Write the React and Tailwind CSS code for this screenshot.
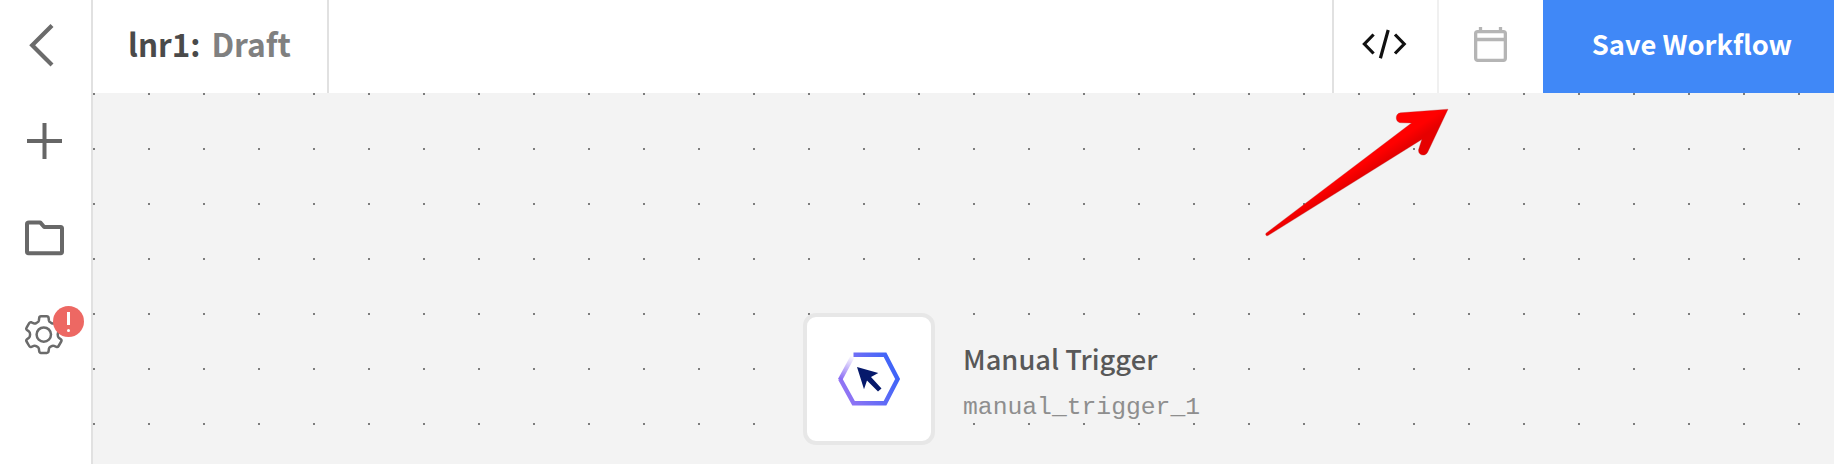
const sans = "font-['Noto_Sans_CJK_SC','Noto_Sans',sans-serif]";

function Sidebar() {
  return (
    <aside className="flex w-[93px] shrink-0 flex-col items-start border-r-2 border-[#e1e1e1] bg-white">
      <svg className="ml-[28px] mt-[22px] h-[46px] w-[28px]" viewBox="0 0 28 46" fill="none" stroke="#6b6b6b" strokeWidth="4.2">
        <path d="M24 3.4 4.2 23.2 24 43" />
      </svg>
      <svg className="ml-[27px] mt-[55px] h-[36px] w-[36px]" viewBox="0 0 36 36" fill="none" stroke="#666" strokeWidth="4">
        <path d="M0 18H35M17.5 0V36" />
      </svg>
      <svg className="ml-[25px] mt-[61px] h-[36px] w-[40px]" viewBox="0 0 40 36" fill="none" stroke="#686868" strokeWidth="4" strokeLinejoin="round">
        <path d="M4 2.4H15.2L19.2 7H35.6Q37 7 37 8.6V31.8Q37 33.2 35.6 33.2H3.6Q2 33.2 2 31.8V4Q2 2.4 4 2.4Z" />
      </svg>
      <div className="relative ml-[25px] mt-[58px] h-[42px] w-[60px]">
        <svg className="absolute left-0 top-0 h-[42px] w-[40px]" viewBox="0 0 40 42" fill="none" stroke="#6b6b6b" strokeWidth="2.5" strokeLinejoin="round">
          <circle cx="18.8" cy="20.6" r="7.2" />
          <path d="M16 2.3H21.8Q23.4 2.3 23.6 4L23.9 6.4Q24.2 7.8 25.6 8.5L26.6 9.1Q27.8 9.8 29 9.3L31.4 8.3Q32.8 7.8 33.6 9.2L36.2 13.7Q37 15 35.8 16L33.8 17.5Q32.7 18.4 32.7 20.6Q32.7 22.8 33.8 23.7L35.8 25.2Q37 26.2 36.2 27.5L33.6 32Q32.8 33.4 31.4 32.9L29 31.9Q27.8 31.4 26.6 32.1L25.6 32.7Q24.2 33.4 23.9 34.8L23.6 37.2Q23.4 38.9 21.8 38.9H16Q14.4 38.9 14.2 37.2L13.9 34.8Q13.6 33.4 12.2 32.7L11.2 32.1Q10 31.4 8.8 31.9L6.4 32.9Q5 33.4 4.2 32L1.6 27.5Q.8 26.2 2 25.2L4 23.7Q5.1 22.8 5.1 20.6Q5.1 18.4 4 17.5L2 16Q.8 15 1.6 13.7L4.2 9.2Q5 7.8 6.4 8.3L8.8 9.3Q10 9.8 11.2 9.1L12.2 8.5Q13.6 7.8 13.9 6.4L14.2 4Q14.4 2.3 16 2.3Z" />
        </svg>
        <div className="absolute left-[28px] -top-[8px] flex h-[31px] w-[31px] flex-col items-center gap-[4px] rounded-full bg-[#ed6863] pt-[6px]">
          <span className="h-[13px] w-[3px] bg-white" />
          <span className="h-[3px] w-[3px] rounded-full bg-white" />
        </div>
      </div>
    </aside>
  );
}

function Header() {
  return (
    <header className="flex h-[93px] shrink-0 bg-white">
      <div className="flex w-[236px] items-center border-r-2 border-[#e1e1e1] pb-[6px] pl-[35px] text-[31.4px] font-bold leading-none whitespace-pre">
        <span className="text-[#4a4a4a]">lnr1:</span>
        <span className="ml-[11px] text-[31.8px] text-[#808080]">Draft</span>
      </div>
      <div className="flex-1" />
      <div className="flex w-[107px] items-center border-x-2 border-l-[#e1e1e1] border-r-[#f0f0f0] pl-[27px]">
        <svg className="-mt-[5px] h-[30px] w-[46px]" viewBox="0 0 46 30" fill="none" stroke="#111" strokeWidth="3.2">
          <path d="M12.6 5.5 3.4 15 12.6 24.5M34 5.5 43.2 15 34 24.5M27.2 1 19.4 29.2" />
        </svg>
      </div>
      <div className="flex w-[104px] items-center pl-[35px]">
        <svg className="-mt-[4px] h-[35px] w-[33px]" viewBox="0 0 33 35" fill="none" stroke="#b5b5b5" strokeWidth="3.3">
          <rect x="1.65" y="4.6" width="29.7" height="28.7" rx="2" />
          <path d="M2 12.5H31M6.5 0V4M26.5 0V4" />
        </svg>
      </div>
      <button className="flex w-[291px] items-center justify-center bg-[#4088f7] pb-[6px] pl-[7px] text-[27.3px] font-bold leading-none text-white whitespace-nowrap">
        Save Workflow
      </button>
    </header>
  );
}

function TriggerNode() {
  return (
    <div className="absolute left-[710px] top-[220px] flex h-[132px] items-start">
      <div className="flex h-[132px] w-[132px] items-center justify-center rounded-[13px] border-4 border-[#e7e7e7] bg-white">
        <svg className="h-[54px] w-[64px]" viewBox="0 0 64 54" fill="none">
          <defs>
            <linearGradient id="hex" x1="60" y1="18" x2="6" y2="40" gradientUnits="userSpaceOnUse">
              <stop stopColor="#3c64f8" />
              <stop offset="1" stopColor="#9475f4" />
            </linearGradient>
            <linearGradient id="fade" x1="16" y1="4" x2="4" y2="27" gradientUnits="userSpaceOnUse">
              <stop stopColor="#9475f4" stopOpacity="0" />
              <stop offset="1" stopColor="#8b6ef5" />
            </linearGradient>
          </defs>
          <path d="M16.5 2.8H48L60.6 27 48 51.3H16.6L3.2 27" stroke="url(#hex)" strokeWidth="4.4" />
          <path d="M2.9 28 15.6 4.5" stroke="url(#fade)" strokeWidth="4.4" />
          <path d="M20 15 41.3 21 34 25 44.5 36.5 41 39.5 30 28.5 27 37.3Z" fill="#06196b" />
        </svg>
      </div>
      <div className="flex flex-col items-start pl-[28px] pt-[26px]">
        <div className="bg-[#f3f3f3] text-[27.3px] font-medium leading-[38px] text-[#585858] whitespace-nowrap">Manual Trigger</div>
        <div className="mt-[12px] font-['Liberation_Mono',monospace] text-[24.7px] leading-[36px] text-[#8e8e8e] whitespace-nowrap">manual_trigger_1</div>
      </div>
    </div>
  );
}

function Arrow() {
  return (
    <svg className="absolute left-[1167px] top-[10px] h-[140px] w-[196px]" viewBox="1260 103 196 140">
      <defs>
        <linearGradient id="red" x1="1350" y1="158" x2="1366" y2="182" gradientUnits="userSpaceOnUse">
          <stop offset="0.4" stopColor="#ff0000" />
          <stop offset="0.75" stopColor="#e60000" />
        </linearGradient>
      </defs>
      <path d="M1448 109.2 1400.5 112.8C1394.5 113.5 1395 122.8 1401 122.8L1411.5 123 1266 233.2C1265 235 1266.5 236.5 1268 235.6L1421.8 139.5 1418.6 149.5C1417.5 155.5 1425.5 157.5 1428 151.5Z" fill="url(#red)" stroke="#b03030" strokeOpacity=".45" strokeWidth=".7" />
    </svg>
  );
}

export default function App() {
  return (
    <div className={`flex h-[464px] w-[1834px] overflow-hidden ${sans}`}>
      <Sidebar />
      <div className="flex flex-1 flex-col">
        <Header />
        <main className="relative flex-1 bg-[conic-gradient(from_270deg_at_2px_2px,#7c7c7c_90deg,#f3f3f3_0)] bg-size-[55px_55px]">
          <TriggerNode />
          <Arrow />
        </main>
      </div>
    </div>
  );
}
